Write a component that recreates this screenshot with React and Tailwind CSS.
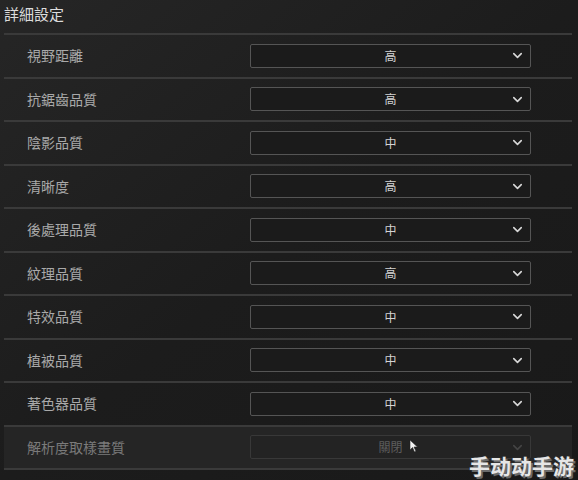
import { ChevronDown } from "lucide-react"

const settings = [
    { label: "視野距離", value: "高" },
    { label: "抗鋸齒品質", value: "高" },
    { label: "陰影品質", value: "中" },
    { label: "清晰度", value: "高" },
    { label: "後處理品質", value: "中" },
    { label: "紋理品質", value: "高" },
    { label: "特效品質", value: "中" },
    { label: "植被品質", value: "中" },
    { label: "著色器品質", value: "中" },
    { label: "解析度取樣畫質", value: "關閉", disabled: true },
]

function SettingRow({ label, value, disabled }) {
    return (
        <div className={"relative flex items-center h-[43.5px] border-t-2 border-[#3a3a3a] " + (disabled ? "bg-[#252525]" : "")}>
            <span className={"pl-[23px] w-[246px] text-[14px] " + (disabled ? "text-[#7a7a7a]" : "text-[#a9a9a9]")}>{label}</span>
            <div className={"relative flex items-center justify-center w-[281px] h-[24px] rounded-[2px] border " + (disabled ? "border-[#383838] bg-[#232323]" : "border-[#555] bg-[#1b1b1b]")}>
                <span className={"text-[12px] " + (disabled ? "text-[#5e5e5e]" : "text-[#d4d4d4]")}>{value}</span>
                <ChevronDown className={"absolute right-[5px] " + (disabled ? "text-[#444]" : "text-[#d8d8d8]")} size={15} strokeWidth={2.5} />
            </div>
            {disabled && (
                <svg className="absolute left-[405px] top-[12px]" width="10" height="14" viewBox="0 0 10 14">
                    <path d="M1 1 L1 11 L3.5 8.5 L5.5 13 L7 12.3 L5 8 L8.5 8 Z" fill="#f2f2f2" stroke="#222" strokeWidth="0.6" />
                </svg>
            )}
        </div>
    )
}

export default function App() {
    return (
        <div className="relative w-[578px] h-[480px] overflow-hidden bg-gradient-to-br from-[#262626] via-[#1c1c1c] to-[#191919]" style={{ fontFamily: '"Noto Sans CJK TC", "Noto Sans", sans-serif' }}>
            <div className="h-[33px] pl-[4px] pt-[3px] text-[15px] text-[#dcdcdc]">詳細設定</div>
            <div className="ml-[4px] w-[568px]">
                {settings.map((s) => (
                    <SettingRow key={s.label} {...s} />
                ))}
                <div className="border-t-2 border-[#3a3a3a]" />
            </div>
            <div className="absolute right-[4px] bottom-[4px] text-[21px] leading-none font-bold text-[#e6e6e6]" style={{ WebkitTextStroke: "1.5px #2a2a2a", paintOrder: "stroke fill", textShadow: "2px 2px 0 #6a6a6a" }}>手动动手游</div>
        </div>
    )
}
